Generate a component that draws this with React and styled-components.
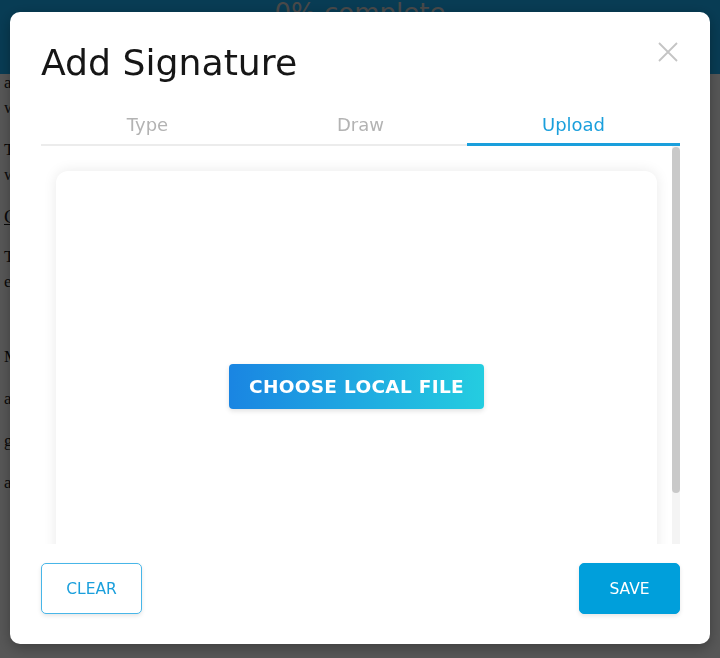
import React, { useState } from "react";
import styled, { createGlobalStyle } from "styled-components";

const GlobalStyle = createGlobalStyle`
  html, body {
    margin: 0;
    padding: 0;
    width: 720px;
    height: 658px;
    overflow: hidden;
    background: #ffffff;
  }
  * { box-sizing: border-box; }
`;

const sans = `"DejaVu Sans", "Open Sans", sans-serif`;

const Page = styled.div`
  width: 720px;
  height: 658px;
  background: #ffffff;
  font-family: "Liberation Serif", serif;
  color: #1c1c1c;
`;

const ProgressBar = styled.div`
  height: 74px;
  background: #18aff5;
  display: flex;
  justify-content: center;
  align-items: flex-start;
  color: #d6d6d6;
  font-family: ${sans};
  font-size: 26px;
  line-height: 26px;
  overflow: hidden;
`;

const Doc = styled.div`
  padding: 0 4px;
  margin-top: -4px;
  font-size: 17px;
  line-height: 25px;

  p { margin: 0 0 17px; }
  h3 {
    margin: 0 0 15px;
    font-size: 19px;
    font-weight: 400;
    text-decoration: underline;
  }
`;

const Spacer = styled.div`
  height: ${(p) => p.$h}px;
`;

const Overlay = styled.div`
  position: fixed;
  inset: 0;
  background: rgba(0, 0, 0, 0.66);
  display: flex;
  align-items: flex-start;
  justify-content: center;
  padding-top: 12px;
`;

const Modal = styled.div`
  width: 700px;
  height: 632px;
  background: #ffffff;
  border-radius: 10px;
  padding: 29px 30px 29px 31px;
  display: flex;
  flex-direction: column;
  font-family: ${sans};
  box-shadow: 0 4px 14px rgba(0, 0, 0, 0.3);
`;

const Header = styled.div`
  display: flex;
  justify-content: space-between;
  align-items: flex-start;
  height: 67px;
`;

const Title = styled.h2`
  margin: 0;
  padding-top: 2px;
  font-size: 36.2px;
  font-weight: 400;
  color: #161616;
  line-height: 40px;
`;

const Close = styled.button`
  border: 0;
  background: none;
  padding: 0;
  margin: 1px 2px 0 0;
  width: 20px;
  height: 20px;
  cursor: pointer;
`;

const Tabs = styled.div`
  display: grid;
  grid-template-columns: repeat(3, 1fr);
  border-bottom: 2px solid #ececec;
`;

const Tab = styled.button`
  border: 0;
  background: none;
  font-family: ${sans};
  font-size: 18px;
  height: 38px;
  padding: 0 0 3px;
  margin-bottom: -2px;
  color: ${(p) => (p.$active ? "#1a9fdc" : "#b3b3b3")};
  border-bottom: 3px solid ${(p) => (p.$active ? "#1a9fdc" : "transparent")};
  cursor: pointer;
`;

const BodyRow = styled.div`
  height: 398px;
  display: flex;
  overflow: hidden;
`;

const Body = styled.div`
  flex: 1;
  overflow: hidden;
  padding: 25px 15px 5px 15px;
`;

const ScrollTrack = styled.div`
  width: 8px;
  background: #f4f4f4;
  padding-top: 1px;
`;

const ScrollThumb = styled.div`
  height: 346px;
  background: #c9c9c9;
  border-radius: 4px;
`;

const DropCard = styled.div`
  height: 430px;
  border-radius: 12px;
  background: #ffffff;
  box-shadow: 0 0 14px rgba(0, 0, 0, 0.09);
  display: flex;
  align-items: center;
  justify-content: center;
`;

const ChooseButton = styled.button`
  width: 255px;
  height: 45px;
  border: 0;
  border-radius: 4px;
  background: linear-gradient(90deg, #1a85e2 0%, #24cde0 100%);
  color: #ffffff;
  font-family: ${sans};
  font-weight: 700;
  font-size: 18.5px;
  letter-spacing: 0.3px;
  box-shadow: 0 2px 5px rgba(0, 0, 0, 0.12);
  cursor: pointer;
`;

const Footer = styled.div`
  margin-top: 19px;
  display: flex;
  justify-content: space-between;
`;

const ActionButton = styled.button`
  width: 101px;
  height: 51px;
  border-radius: 5px;
  font-family: ${sans};
  font-size: 15.5px;
  cursor: pointer;
  border: 1px solid ${(p) => (p.$primary ? "#009fdb" : "#48b6e8")};
  background: ${(p) => (p.$primary ? "#009fdb" : "#ffffff")};
  color: ${(p) => (p.$primary ? "#ffffff" : "#1a9fdc")};
  box-shadow: 0 2px 4px rgba(0, 0, 0, 0.1);
`;

const tabs = ["Type", "Draw", "Upload"];

export default function App() {
  const [active, setActive] = useState("Upload");

  return (
    <Page>
      <GlobalStyle />
      <ProgressBar>0% complete</ProgressBar>
      <Doc>
        <p>agreement between the parties, and<br />will be binding upon signature.</p>
        <p>The undersigned agrees to the terms set out<br />within this document.</p>
        <h3>General Terms</h3>
        <p>This agreement shall commence on the date of signature and remains in force as<br />effective until terminated by either party.</p>
        <Spacer $h={33} />
        <p>Mutual obligations</p>
        <p>and responsibilities</p>
        <p>governing law</p>
        <p>attached schedules</p>
      </Doc>

      <Overlay>
        <Modal>
          <Header>
            <Title>Add Signature</Title>
            <Close aria-label="Close">
              <svg width="20" height="20" viewBox="0 0 20 20">
                <path d="M1 1 L19 19 M19 1 L1 19" stroke="#c4c4c4" strokeWidth="1.8" fill="none" />
              </svg>
            </Close>
          </Header>

          <Tabs>
            {tabs.map((t) => (
              <Tab key={t} $active={active === t} onClick={() => setActive(t)}>
                {t}
              </Tab>
            ))}
          </Tabs>

          <BodyRow>
            <Body>
              <DropCard>
                <ChooseButton>CHOOSE LOCAL FILE</ChooseButton>
              </DropCard>
            </Body>
            <ScrollTrack>
              <ScrollThumb />
            </ScrollTrack>
          </BodyRow>

          <Footer>
            <ActionButton>CLEAR</ActionButton>
            <ActionButton $primary>SAVE</ActionButton>
          </Footer>
        </Modal>
      </Overlay>
    </Page>
  );
}
